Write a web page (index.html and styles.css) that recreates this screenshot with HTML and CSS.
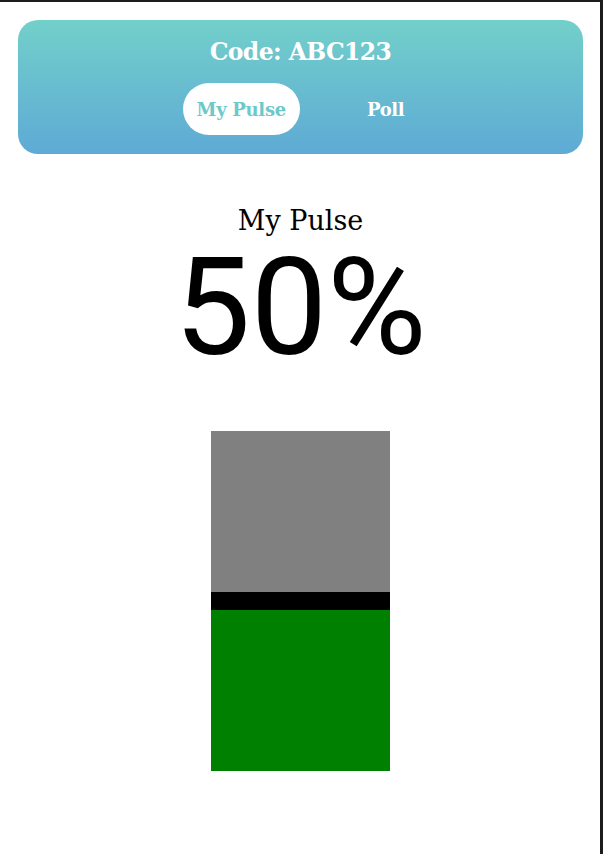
FILE: index.html
```html
<!DOCTYPE html>
<html lang="en">
<head>
<meta charset="utf-8">
<title>My Pulse</title>
<link rel="stylesheet" href="styles.css">
</head>
<body>
<div class="frame">
  <header class="card">
    <h1 class="code">Code: ABC123</h1>
    <nav class="tabs">
      <span class="tab active">My Pulse</span>
      <span class="tab">Poll</span>
    </nav>
  </header>
  <main class="pulse">
    <h2 class="pulse-title">My Pulse</h2>
    <div class="pulse-value">50%</div>
    <div class="meter">
      <div class="meter-empty"></div>
      <div class="meter-line"></div>
      <div class="meter-fill"></div>
    </div>
  </main>
</div>
</body>
</html>
```

FILE: styles.css
```css
html, body {
  margin: 0;
  padding: 0;
  background: #ffffff;
}

.frame {
  box-sizing: border-box;
  width: 603px;
  height: 854px;
  border-top: 2px solid #1c1c1c;
  border-right: 3px solid #1c1c1c;
  padding: 18px 17px 0 18px;
  background: #ffffff;
  font-family: "DejaVu Serif", "Liberation Serif", serif;
}

.card {
  height: 134px;
  box-sizing: border-box;
  border-radius: 20px;
  background: linear-gradient(to bottom, #72d0ca, #5eaad5);
  display: flex;
  flex-direction: column;
  align-items: center;
  padding-top: 17px;
}

.code {
  margin: 0;
  color: #ffffff;
  font-size: 23.5px;
  font-weight: bold;
  line-height: 30px;
  letter-spacing: -0.6px;
}

.tabs {
  margin-top: 16px;
  display: flex;
  gap: 53px;
}

.tab {
  height: 52px;
  box-sizing: border-box;
  padding: 0 14px;
  border-radius: 26px;
  display: flex;
  align-items: center;
  color: #ffffff;
  font-size: 18px;
  font-weight: bold;
  letter-spacing: -0.3px;
}

.tab.active {
  background: #ffffff;
  color: #6dc9c9;
}

.pulse {
  display: flex;
  flex-direction: column;
  align-items: center;
}

.pulse-title {
  margin: 53px 0 0;
  font-size: 27px;
  font-weight: normal;
  line-height: 28px;
  color: #000000;
}

.pulse-value {
  font-family: Roboto, "Liberation Sans", sans-serif;
  font-size: 136px;
  line-height: 146px;
  color: #000000;
}

.meter {
  margin-top: 50px;
  width: 179px;
  display: flex;
  flex-direction: column;
}

.meter-empty {
  height: 161px;
  background: #808080;
}

.meter-line {
  height: 18px;
  background: #000000;
}

.meter-fill {
  height: 161px;
  background: #008000;
}
```
